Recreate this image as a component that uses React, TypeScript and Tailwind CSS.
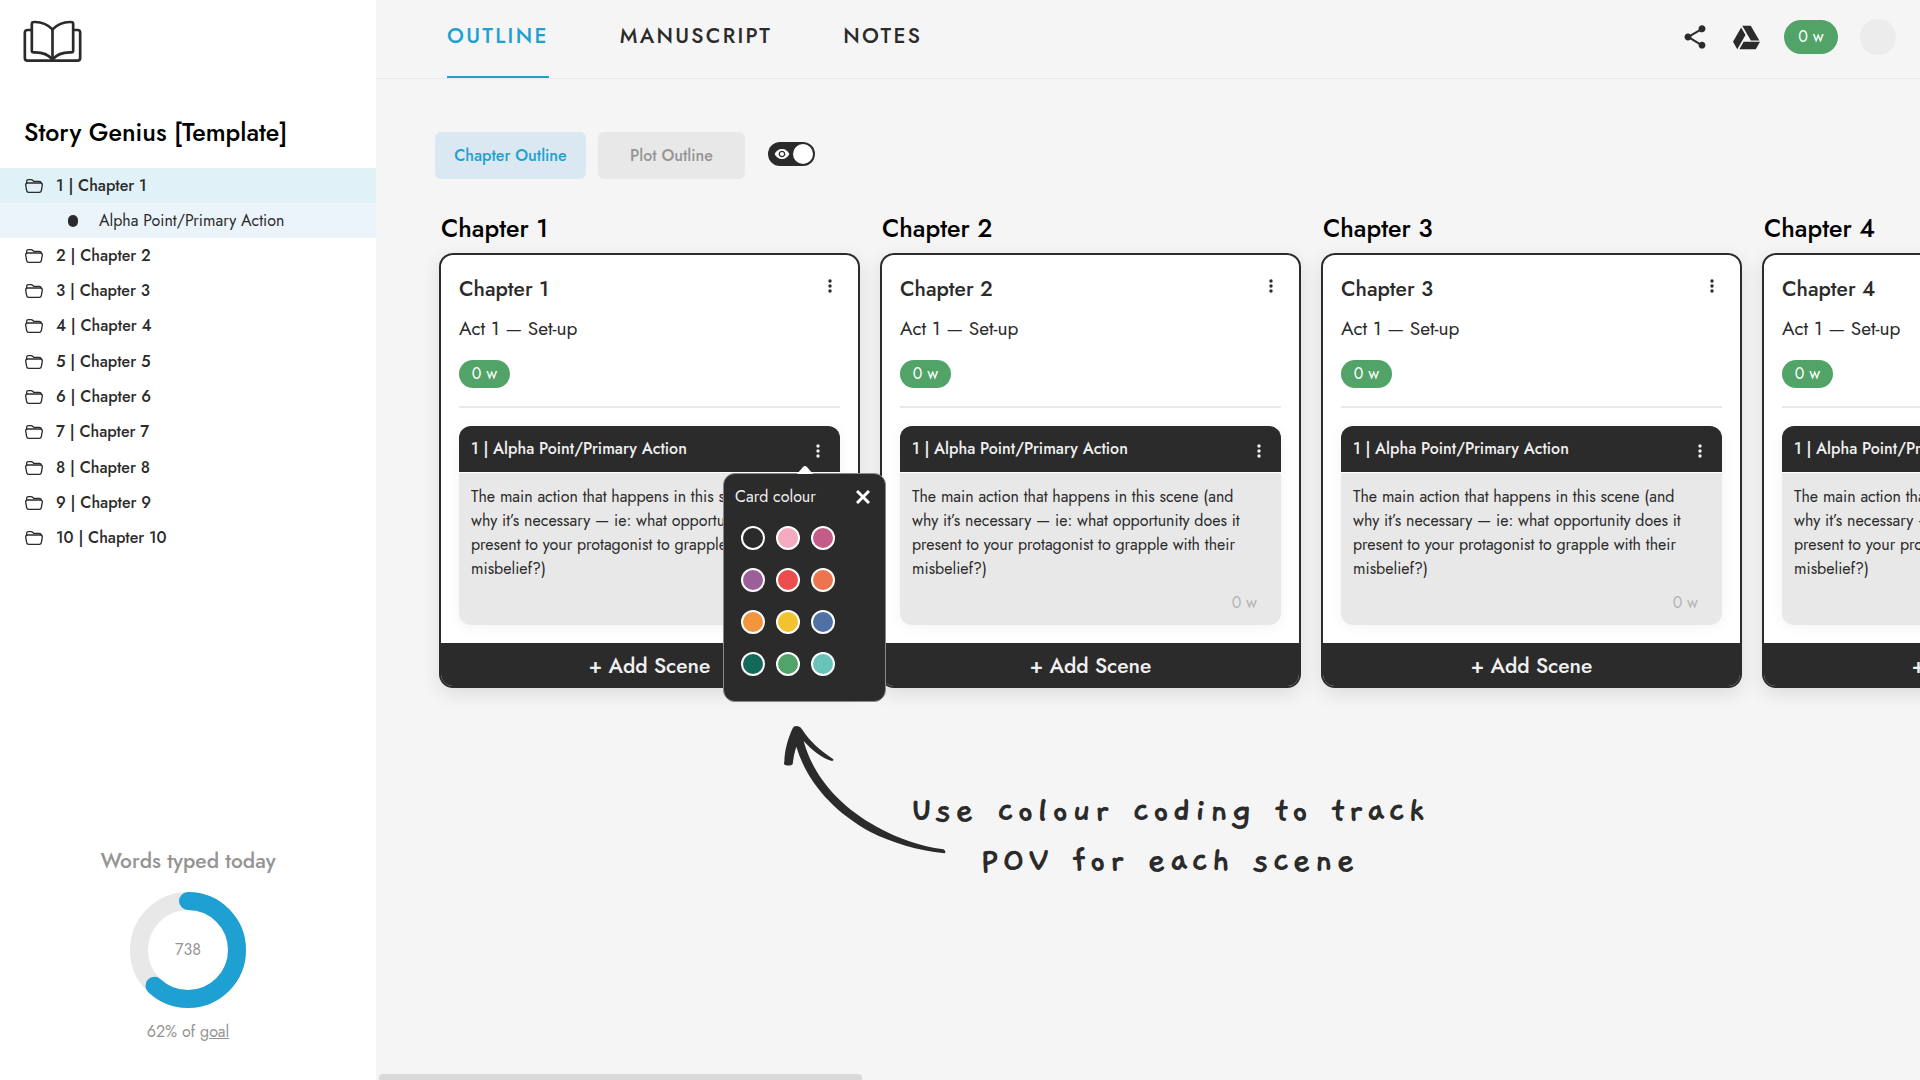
import { useState } from "react";
import { FaGoogleDrive } from "react-icons/fa";
import { MdShare, MdVisibility } from "react-icons/md";

const chapters = Array.from({ length: 10 }, (_, i) => i + 1);

const swatches = [
  { name: "Black", color: "bg-[#2b2b2b]" },
  { name: "Pink", color: "bg-[#f5abbf]" },
  { name: "Magenta", color: "bg-[#c45c8a]" },
  { name: "Purple", color: "bg-[#9b5f99]" },
  { name: "Red", color: "bg-[#ee4d4d]" },
  { name: "Coral", color: "bg-[#ec744f]" },
  { name: "Orange", color: "bg-[#f1963d]" },
  { name: "Yellow", color: "bg-[#f2c32f]" },
  { name: "Blue", color: "bg-[#4f72a6]" },
  { name: "Dark green", color: "bg-[#136a5a]" },
  { name: "Green", color: "bg-[#51a367]" },
  { name: "Teal", color: "bg-[#68c3b8]" },
];

function BookLogo() {
  return (
    <svg
      viewBox="0 0 176 126"
      className="w-[59px] h-[42px]"
      fill="none"
      stroke="#2b2b2b"
      strokeWidth="8"
      strokeLinecap="round"
      strokeLinejoin="round"
    >
      <path d="M24 30H14Q5 30 5 38V114Q5 122 13 122H163Q171 122 171 114V38Q171 30 163 30H152" />
      <path d="M88 28C72 12 52 5 32 6Q26 6 26 12V92Q26 97 32 97C55 96 75 103 88 118" />
      <path d="M88 28C104 12 124 5 144 6Q150 6 150 12V92Q150 97 144 97C121 96 101 103 88 118" />
      <path d="M88 28V118" />
    </svg>
  );
}

function FolderIcon() {
  return (
    <svg
      viewBox="0 0 54 42"
      className="w-[18px] h-[14px] shrink-0"
      fill="none"
      stroke="#2b2b2b"
      strokeWidth="4"
      strokeLinejoin="round"
    >
      <path d="M8 12H46Q52 12 52 18L49 35Q48 40 43 40H11Q6 40 5 35L2 18Q2 12 8 12Z" />
      <path d="M5 13V7Q5 2 10 2H18Q21 2 23 4L26 7H43Q48 7 49 12" />
    </svg>
  );
}

function Dots() {
  return (
    <svg viewBox="0 0 4 14" className="w-1 h-3.5" fill="currentColor">
      <circle cx="2" cy="2" r="1.7" />
      <circle cx="2" cy="7" r="1.7" />
      <circle cx="2" cy="12" r="1.7" />
    </svg>
  );
}

function Sidebar() {
  return (
    <aside className="w-[376px] shrink-0 bg-white flex flex-col justify-between">
      <div>
        <a href="#home" aria-label="Home" className="block w-fit ml-[23px] mt-5">
          <BookLogo />
        </a>

        <h1 className="ml-6 mt-[54px] text-[25px] leading-8 font-medium text-black">
          Story Genius [Template]
        </h1>

        <ul className="mt-5 h-[388px] flex flex-col justify-between">
          {chapters.map((n) => (
            <li key={n}>
              <a
                href={"#chapter-" + n}
                className={
                  n === 1
                    ? "h-[35px] pl-[25px] flex items-center gap-[13px] bg-[#e0f1f8]"
                    : "h-[35px] pl-[25px] flex items-center gap-[13px]"
                }
              >
                <FolderIcon />
                <span className="font-medium">{n + " | Chapter " + n}</span>
              </a>

              {n === 1 && (
                <a
                  href="#scene-1"
                  className="h-[35px] pl-[68px] flex items-center gap-[21px] bg-[#ebf4fa]"
                >
                  <span className="w-[10px] h-3 rounded-full bg-[#2b2b2b]" />
                  <span>Alpha Point/Primary Action</span>
                </a>
              )}
            </li>
          ))}
        </ul>
      </div>

      <div className="flex flex-col items-center pb-9 text-[#959595]">
        <h2 className="text-[21px] leading-8 font-medium">Words typed today</h2>

        <div className="mt-[15px] grid place-items-center">
          <svg
            viewBox="0 0 116 116"
            className="size-[116px] -rotate-90 col-start-1 row-start-1"
            fill="none"
            strokeWidth="18"
          >
            <circle cx="58" cy="58" r="49" stroke="#e8e8e8" />
            <circle
              cx="58"
              cy="58"
              r="49"
              stroke="#1ea0d2"
              strokeLinecap="round"
              pathLength="100"
              strokeDasharray="62 100"
            />
          </svg>
          <span className="col-start-1 row-start-1">738</span>
        </div>

        <p className="mt-3 leading-6">
          62% of{" "}
          <a href="#goal" className="underline">
            goal
          </a>
        </p>
      </div>
    </aside>
  );
}

function Header() {
  return (
    <header className="h-[79px] pl-[71px] pr-6 flex justify-between border-b border-[#e9e9e9]">
      <nav className="flex gap-[71px] text-[21px] leading-8 font-medium tracking-[0.11em]">
        <a
          href="#outline"
          className="pt-5 border-b-2 border-[#1ea0d2] text-[#1ea0d2]"
        >
          OUTLINE
        </a>
        <a href="#manuscript" className="pt-5">
          MANUSCRIPT
        </a>
        <a href="#notes" className="pt-5">
          NOTES
        </a>
      </nav>

      <div className="h-[74px] flex items-center">
        <button aria-label="Share">
          <MdShare className="size-7" />
        </button>
        <button aria-label="Google Drive" className="ml-6">
          <FaGoogleDrive className="size-[27px]" />
        </button>
        <span className="ml-6 w-[54px] h-[34px] rounded-full bg-[#51a367] text-white grid place-items-center">
          0 w
        </span>
        <button
          aria-label="Account"
          className="ml-[22px] size-9 rounded-full bg-[#ececec]"
        />
      </div>
    </header>
  );
}

function Toolbar() {
  const [visible, setVisible] = useState<boolean>(true);

  return (
    <div className="mt-[53px] pl-[59px] flex items-center gap-3 font-medium">
      <button className="w-[151px] h-[47px] rounded-md bg-[#d9e8f1] text-[#1ea0d2]">
        Chapter Outline
      </button>
      <button className="w-[147px] h-[47px] rounded-md bg-[#e8e8e8] text-[#959595]">
        Plot Outline
      </button>

      <label className="ml-[11px] mb-1 w-[47px] h-6 px-0.5 rounded-full bg-[#2b2b2b] flex items-center justify-between">
        <input
          type="checkbox"
          aria-label="Show scenes"
          checked={visible}
          onChange={() => setVisible(!visible)}
          className="sr-only"
        />
        <MdVisibility className="ml-1 size-4 text-white" />
        <span className="size-5 rounded-full bg-white" />
      </label>
    </div>
  );
}

function ColourMenu({ onClose }: { onClose: () => void }) {
  return (
    <div className="absolute z-10 top-[47px] -right-[46px] w-[163px] rounded-xl border border-[#8a8a8a] bg-[#2b2b2b] text-[#f0f0f0]">
      <svg
        viewBox="0 0 16 8"
        className="absolute -top-2 left-[73px] w-4 h-2"
        fill="white"
      >
        <path d="M0 8L6 1Q8 -1 10 1L16 8Z" />
      </svg>

      <div className="h-[46px] pl-[11px] pr-[15px] flex items-center justify-between">
        <span>Card colour</span>
        <button aria-label="Close" onClick={onClose}>
          <svg
            viewBox="0 0 14 14"
            className="size-[14px]"
            stroke="white"
            strokeWidth="3"
          >
            <path d="M1 1L13 13M13 1L1 13" />
          </svg>
        </button>
      </div>

      <div className="pt-1.5 pb-[25px] pl-[17px] grid grid-cols-[repeat(3,24px)] gap-x-[11px] gap-y-[18px]">
        {swatches.map((s) => (
          <button
            key={s.name}
            aria-label={s.name}
            className={"size-6 rounded-full border-2 border-white " + s.color}
          />
        ))}
      </div>
    </div>
  );
}

function Column({ n }: { n: number }) {
  const [open, setOpen] = useState<boolean>(n === 1);

  return (
    <section className="w-[421px] shrink-0">
      <h2 className="ml-0.5 mb-[9px] text-[25px] leading-8 font-medium text-black">
        Chapter {n}
      </h2>

      <div className="rounded-[14px] border-2 border-[#2b2b2b] bg-white shadow-[0_6px_20px_rgba(0,0,0,0.1)]">
        <div className="px-[18px] pt-[18px]">
          <div className="flex justify-between">
            <h3 className="text-[21px] leading-8 font-medium">Chapter {n}</h3>
            <button aria-label="Chapter options" className="mr-2 h-[26px]">
              <Dots />
            </button>
          </div>

          <p className="mt-2.5 text-[19px] leading-7">Act 1 — Set-up</p>

          <span className="mt-[17px] w-[51px] h-7 rounded-full bg-[#51a367] text-white grid place-items-center">
            0 w
          </span>

          <hr className="mt-[18px] border-t-2 border-[#e8e8e8]" />

          <article className="relative mt-[18px] rounded-xl shadow-[0_2px_14px_rgba(0,0,0,0.05)]">
            <div className="h-[46px] pl-3 pr-5 rounded-t-xl bg-[#2b2b2b] text-[#f0f0f0] flex items-center justify-between">
              <h4 className="font-medium">1 | Alpha Point/Primary Action</h4>
              <button
                aria-label="Scene options"
                onClick={() => setOpen(!open)}
                className="pt-1"
              >
                <Dots />
              </button>
            </div>

            <div className="pt-3 pb-2.5 pl-3 pr-6 rounded-b-xl border-t border-white bg-[#e8e8e8] leading-6">
              <p>
                The main action that happens in this scene (and why it’s
                necessary — ie: what opportunity does it present to your
                protagonist to grapple with their misbelief?)
              </p>
              <p className="mt-2.5 text-right text-[#b4b4b4]">0 w</p>
            </div>

            {open && <ColourMenu onClose={() => setOpen(false)} />}
          </article>
        </div>

        <button className="mt-[18px] pt-1 w-full h-[43px] rounded-b-xl bg-[#2b2b2b] text-[#f0f0f0] text-[21px] font-medium">
          + Add Scene
        </button>
      </div>
    </section>
  );
}

function Annotation() {
  return (
    <div className="mt-[22px] ml-[394px] flex items-start">
      <svg
        viewBox="0 0 570 480"
        className="w-[190px] h-40 shrink-0"
        fill="#2b2b2b"
      >
        <path d="M68 55Q72 46 84 49Q92 51 96 58C120 95 150 122 188 146Q194 150 186 153C155 145 125 120 101 93C130 200 210 290 320 350C390 388 450 408 520 418Q530 424 524 430C440 420 370 400 300 365C190 305 110 215 79 110C72 130 70 148 68 163Q60 170 44 164Q40 161 43 155C44 120 54 85 68 55Z" />
      </svg>
      <p className="-ml-[50px] mt-[76px] text-center text-[40px] leading-[50px] tracking-[3px] font-bold font-[Gaegu,Caveat,cursive]">
        Use colour coding to track
        <br />
        POV for each scene
      </p>
    </div>
  );
}

export default function App() {
  return (
    <div className="min-h-screen flex bg-[#f5f5f5] text-[#2b2b2b] text-base font-[Jost,Lato,sans-serif]">
      <Sidebar />

      <div className="flex-1 min-w-0 flex flex-col overflow-hidden">
        <Header />

        <main className="flex-1">
          <Toolbar />
          <div className="mt-[33px] pl-[63px] flex gap-5">
            {chapters.map((n) => (
              <Column key={n} n={n} />
            ))}
          </div>
          <Annotation />
        </main>

        <div className="ml-[3px] h-1.5 w-5/16 rounded-t-sm bg-[#d9d9d9]" />
      </div>
    </div>
  );
}
